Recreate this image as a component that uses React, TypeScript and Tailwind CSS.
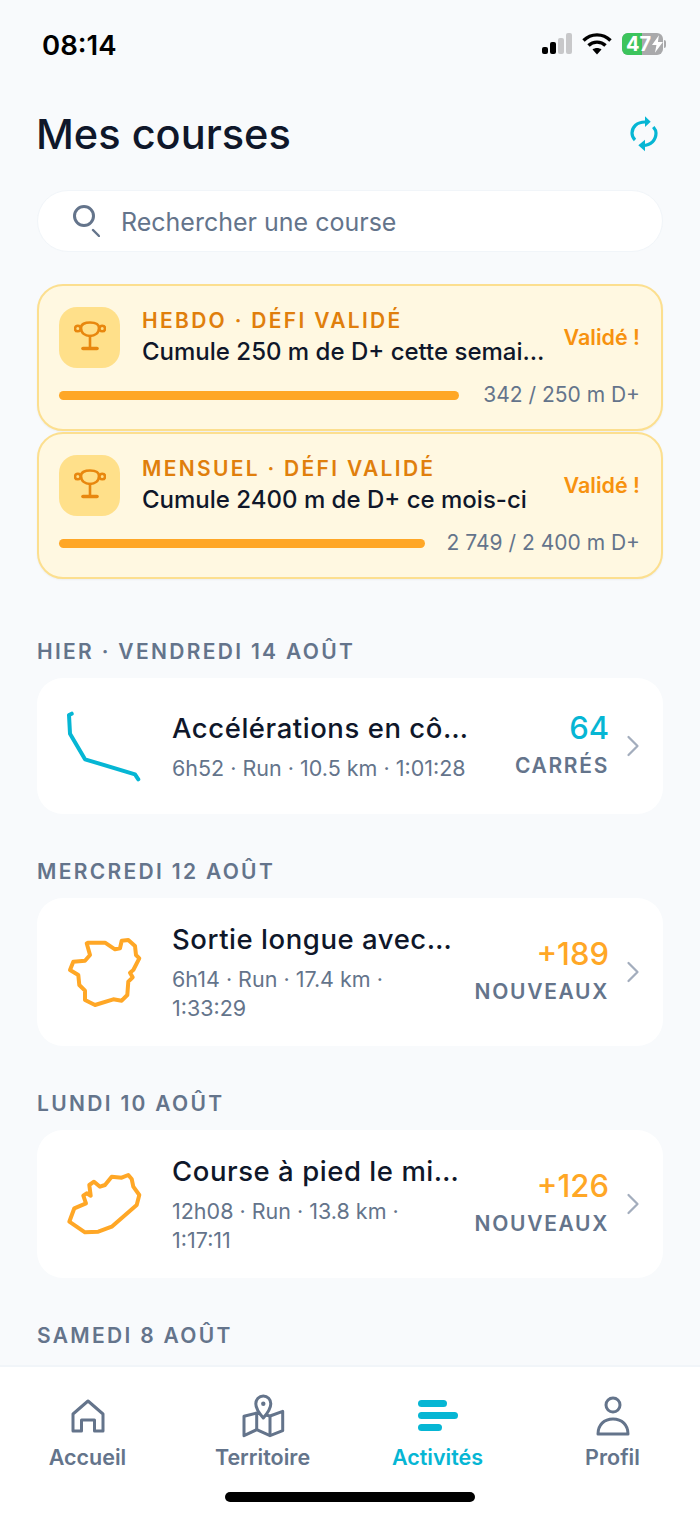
import React from 'react';
import { ChevronRight } from 'lucide-react';

const font = { fontFamily: 'Inter, "Liberation Sans", sans-serif' };

const routeOne = 'M7.7 7.7 L5 9 L6 27.7 L21 53.3 L71 68.3 L74.3 73.3';
const routeTwo =
  'M24.3 10.7 L41 10.7 L51 17.3 L56 16.3 L57.7 8.7 L64.3 8 L71 14 L72 23 L75.3 26.3 L69.3 38 L66 40.7 L68.7 45.3 L64.3 49.7 L63.3 63 L57.7 68.7 L49.3 67.3 L31 73 L21 68 L21 58.7 L15.3 53 L14.3 43 L6 38 L9.3 29.7 L21 28.7 L26 23 L22.7 11.3 Z';
const routeThree =
  'M5.3 57.7 L10.3 44.3 L22 39.3 L19.3 31.7 L22.7 29.3 L26.7 31.7 L25.3 21 L30 17.7 L36 22.7 L41 21 L47.7 12.7 L57.7 13.7 L64.3 11 L67.7 15 L69.3 22.7 L75.3 31 L72.7 41 L47.7 62.7 L34.3 67.7 L21 68.3 Z';

const challenges = [
  { label: 'HEBDO · DÉFI VALIDÉ', title: 'Cumule 250 m de D+ cette semai…', progress: '342 / 250 m D+' },
  { label: 'MENSUEL · DÉFI VALIDÉ', title: 'Cumule 2400 m de D+ ce mois-ci', progress: '2 749 / 2 400 m D+' },
];

const runs = [
  { day: 'HIER · VENDREDI 14 AOÛT', title: 'Accélérations en cô…', meta: '6h52 · Run · 10.5 km · 1:01:28', value: '64', unit: 'CARRÉS', path: routeOne, cyan: true },
  { day: 'MERCREDI 12 AOÛT', title: 'Sortie longue avec…', meta: '6h14 · Run · 17.4 km · 1:33:29', value: '+189', unit: 'NOUVEAUX', path: routeTwo, cyan: false },
  { day: 'LUNDI 10 AOÛT', title: 'Course à pied le mi…', meta: '12h08 · Run · 13.8 km · 1:17:11', value: '+126', unit: 'NOUVEAUX', path: routeThree, cyan: false },
];

const StatusBar = () => (
  <div className="flex h-[88px] shrink-0 items-start justify-between pl-[42px] pr-[37px] pt-[28px]">
    <span className="text-[27.5px] font-semibold leading-[34px] text-black">08:14</span>
    <div className="flex items-center gap-[10px] pt-[5px]">
      <svg width="30" height="22" viewBox="0 0 30 22">
        <rect x="0" y="14" width="6" height="7" rx="2" fill="#000" />
        <rect x="8" y="9" width="6" height="12" rx="2" fill="#000" />
        <rect x="16" y="5" width="6" height="16" rx="2" fill="#c8c8ca" />
        <rect x="24" y="0" width="6" height="21" rx="2" fill="#c8c8ca" />
      </svg>
      <svg width="30" height="22" viewBox="0 0 30 22" fill="none" stroke="#000" strokeWidth="3.4">
        <path d="M1.5 7.5 C9 0 21 0 28.5 7.5" />
        <path d="M6.5 12.5 C11 8 19 8 23.5 12.5" />
        <path d="M15 21.5 L10.5 16.5 C13 14.5 17 14.5 19.5 16.5 Z" fill="#000" stroke="none" />
      </svg>
      <div className="relative">
        <div className="relative flex h-[22px] w-[41px] overflow-hidden rounded-[6px] bg-[#a9a9ab]">
          <div className="h-full w-[20px] bg-[#3cc45c]" />
          <div className="absolute inset-0 flex items-center pl-[4px]">
            <span className="text-[20px] font-bold leading-none text-white">47</span>
            <svg width="11" height="18" viewBox="0 0 11 18" fill="#fff" className="ml-[1px]">
              <path d="M7 0 L0 10 L4.5 10 L3 18 L11 7 L6 7 Z" />
            </svg>
          </div>
        </div>
        <div className="absolute right-[-3px] top-[7px] h-[8px] w-[2px] rounded-r-full bg-[#a9a9ab]" />
      </div>
    </div>
  </div>
);

const Trophy = () => (
  <svg width="32" height="32" viewBox="0 0 32 32" fill="none" stroke="#e8870e" strokeWidth="2.6" strokeLinecap="round">
    <path d="M7 7 C7 3 11 1.5 16 1.5 C21 1.5 25 3 25 7 C25 12 21 15 16 15 C11 15 7 12 7 7 Z" />
    <circle cx="3.8" cy="7.5" r="2.8" />
    <circle cx="28.2" cy="7.5" r="2.8" />
    <path d="M16 15 L16 26" />
    <path d="M9 27.5 L23 27.5" strokeWidth="3.6" />
  </svg>
);

const ChallengeCard = ({ label, title, progress }: { label: string; title: string; progress: string }) => (
  <div className="h-[147px] rounded-[26px] border-2 border-[#fcdf8f] bg-[#fff8e1] px-[20px] pt-[20px] shadow-xs">
    <div className="flex items-center">
      <div className="flex h-[61px] w-[61px] shrink-0 items-center justify-center rounded-[18px] bg-[#ffe08a]">
        <Trophy />
      </div>
      <div className="ml-[22px] min-w-0 flex-1">
        <div className="whitespace-nowrap text-[21px] font-semibold leading-[30px] tracking-[0.11em] text-[#e07f0c]">{label}</div>
        <div className="whitespace-nowrap text-[24px] font-medium leading-[32px] text-[#0f172a]">{title}</div>
      </div>
      <span className="mr-[1px] shrink-0 text-[21.5px] font-semibold text-[#f7920f]">Validé !</span>
    </div>
    <div className="mt-[13px] flex items-center gap-[22px]">
      <div className="h-[9px] flex-1 rounded-full bg-[#ffa726]" />
      <span className="min-w-[160px] shrink-0 pr-[1px] text-right text-[21px] leading-[28px] text-[#64748b]">{progress}</span>
    </div>
  </div>
);

type Run = (typeof runs)[number];

const RunCard = ({ run }: { run: Run }) => (
  <div className="flex min-h-[136px] items-center rounded-[26px] bg-white py-[23px] pl-[27px] pr-[12px]">
    <svg width="80" height="80" viewBox="0 0 80 80" className="shrink-0" fill="none" stroke={run.cyan ? '#06b6d4' : '#ffa726'} strokeWidth="4" strokeLinecap="round" strokeLinejoin="round">
      <path d={run.path} />
    </svg>
    <div className="ml-[28px] min-w-0 flex-1">
      <div className="whitespace-nowrap text-[27.5px] font-medium leading-[36px] tracking-[0.02em] text-[#0f172a]">{run.title}</div>
      <div className={`mt-[8px] text-[21.5px] leading-[29px] text-[#64748b] ${run.cyan ? 'whitespace-nowrap' : ''}`}>{run.meta}</div>
    </div>
    <div className="ml-[20px] shrink-0 text-right">
      <div className={`text-[31px] font-medium leading-[34px] ${run.cyan ? 'text-[#06b6d4]' : 'text-[#ffa726]'}`}>{run.value}</div>
      <div className="mt-[6px] text-[21px] font-semibold leading-[30px] tracking-[0.08em] text-[#64748b]">{run.unit}</div>
    </div>
    <ChevronRight className="ml-[6px] shrink-0 text-[#a3adbd]" size={36} strokeWidth={1.5} />
  </div>
);

const navItems = [
  {
    label: 'Accueil',
    icon: (
      <svg width="40" height="40" viewBox="0 0 40 40" fill="none" stroke="#64748b" strokeWidth="3" strokeLinejoin="round">
        <path d="M5 18 L20 5 L35 18 L35 35 L26.5 35 L26.5 24 L13.5 24 L13.5 35 L5 35 Z" />
      </svg>
    ),
  },
  {
    label: 'Territoire',
    icon: (
      <svg width="44" height="44" viewBox="0 0 44 44" fill="none" stroke="#64748b" strokeWidth="3" strokeLinejoin="round">
        <path d="M15.7 19 L3 22.3 L3 41.7 L15.7 35.7 L29 41.7 L41.7 36.7 L41.7 17.3 L29 22 Z" />
        <path d="M15.7 19 L15.7 35.7 M29 23 L29 41.7" />
        <path d="M22.3 24 C18 19 14.8 14.5 14.8 9.7 C14.8 5.5 18 2 22.3 2 C26.6 2 29.8 5.5 29.8 9.7 C29.8 14.5 26.6 19 22.3 24 Z" fill="#fff" />
        <circle cx="22.3" cy="9.7" r="2.2" fill="#64748b" stroke="none" />
      </svg>
    ),
  },
  {
    label: 'Activités',
    active: true,
    icon: (
      <svg width="40" height="40" viewBox="0 0 40 40" fill="#06b6d4">
        <rect x="0" y="4" width="29" height="7" rx="3.5" />
        <rect x="0" y="16" width="40" height="7" rx="3.5" />
        <rect x="0" y="28" width="24" height="7" rx="3.5" />
      </svg>
    ),
  },
  {
    label: 'Profil',
    icon: (
      <svg width="40" height="42" viewBox="0 0 40 42" fill="none" stroke="#64748b" strokeWidth="3" strokeLinejoin="round">
        <circle cx="20" cy="10" r="7" />
        <path d="M5 39 C5 30 11 24 20 24 C29 24 35 30 35 39 Z" />
      </svg>
    ),
  },
];

const BottomNav = () => (
  <div className="relative h-[150px] shrink-0 border-t-2 border-[#f1f5f9] bg-white">
    <div className="grid grid-cols-4 pt-[26px]">
      {navItems.map((item) => (
        <div key={item.label} className="flex flex-col items-center">
          <div className="flex h-[46px] items-center justify-center">{item.icon}</div>
          <span className={`mt-[3px] text-[21.5px] font-semibold leading-[30px] ${item.active ? 'text-[#06b6d4]' : 'text-[#64748b]'}`}>{item.label}</span>
        </div>
      ))}
    </div>
    <div className="absolute bottom-[13px] left-[225px] h-[10px] w-[250px] rounded-full bg-black" />
  </div>
);

export default function App() {
  return (
    <div className="flex h-[1515px] w-[700px] flex-col overflow-hidden bg-[#f8fafc]" style={font}>
      <StatusBar />
      <div className="min-h-0 flex-1 overflow-hidden px-[37px]">
        <div className="flex items-center justify-between pr-[5px] pt-[16px]">
          <h1 className="-ml-[1px] text-[41.5px] font-medium leading-[60px] text-[#0f172a]">Mes courses</h1>
          <svg width="28" height="36" viewBox="0 0 28 36" fill="none" stroke="#06b6d4" strokeWidth="3.2">
            <path d="M15 6 C7 6 2 11 2 17 C2 20 3 22 5 24" />
            <path d="M13 29.3 C21 29.3 26 24 26 17 C26 15 25 13 23.3 11" />
            <path d="M15 0.3 L20.7 5.8 L15 11 Z" fill="#06b6d4" stroke="none" />
            <path d="M15 23.7 L8.3 29.3 L15 35.3 Z" fill="#06b6d4" stroke="none" />
          </svg>
        </div>
        <div className="mt-[26px] flex h-[62px] items-center rounded-full border border-[#f1f5f9] bg-white pl-[34px]">
          <svg width="28" height="32" viewBox="0 0 28 32" fill="none" stroke="#64748b" strokeWidth="3" strokeLinecap="round">
            <circle cx="12" cy="11" r="9.5" />
            <path d="M21 25 L27 31" strokeWidth="2.4" />
          </svg>
          <span className="ml-[21px] pt-[3px] text-[25px] text-[#64748b]">Rechercher une course</span>
        </div>
        <div className="mt-[32px] flex flex-col gap-px">
          {challenges.map((c) => (
            <ChallengeCard key={c.label} {...c} />
          ))}
        </div>
        <div className="mt-[58px] flex flex-col">
          {runs.map((run) => (
            <div key={run.day} className="mb-[43px]">
              <div className="mb-[11px] text-[21px] font-semibold leading-[30px] tracking-[0.11em] text-[#64748b]">{run.day}</div>
              <RunCard run={run} />
            </div>
          ))}
          <div className="text-[21px] font-semibold leading-[30px] tracking-[0.11em] text-[#64748b]">SAMEDI 8 AOÛT</div>
        </div>
      </div>
      <BottomNav />
    </div>
  );
}
